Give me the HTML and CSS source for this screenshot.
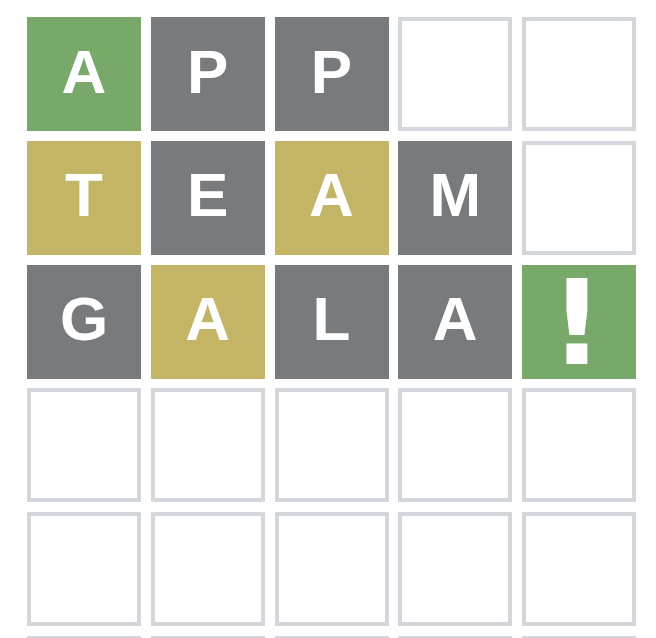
FILE: index.html
```html
<!DOCTYPE html>
<html>
<head>
<meta charset="utf-8">
<link rel="stylesheet" href="styles.css">
</head>
<body>
<div class="board">
  <div class="tile correct">A</div>
  <div class="tile absent">P</div>
  <div class="tile absent">P</div>
  <div class="tile empty"></div>
  <div class="tile empty"></div>

  <div class="tile present">T</div>
  <div class="tile absent">E</div>
  <div class="tile present">A</div>
  <div class="tile absent">M</div>
  <div class="tile empty"></div>

  <div class="tile absent">G</div>
  <div class="tile present">A</div>
  <div class="tile absent">L</div>
  <div class="tile absent">A</div>
  <div class="tile correct bang">!</div>

  <div class="tile empty"></div>
  <div class="tile empty"></div>
  <div class="tile empty"></div>
  <div class="tile empty"></div>
  <div class="tile empty"></div>

  <div class="tile empty"></div>
  <div class="tile empty"></div>
  <div class="tile empty"></div>
  <div class="tile empty"></div>
  <div class="tile empty"></div>

  <div class="tile empty"></div>
  <div class="tile empty"></div>
  <div class="tile empty"></div>
  <div class="tile empty"></div>
  <div class="tile empty"></div>
</div>
</body>
</html>
```
FILE: styles.css
```css
html, body {
  margin: 0;
  padding: 0;
  background: #ffffff;
  overflow: hidden;
}

.board {
  display: grid;
  grid-template-columns: repeat(5, 114px);
  grid-auto-rows: 114px;
  gap: 9.75px;
  padding: 17px 0 0 27px;
}

.tile {
  box-sizing: border-box;
  display: flex;
  align-items: center;
  justify-content: center;
  font-family: "Liberation Sans", Arial, sans-serif;
  font-weight: 700;
  font-size: 62px;
  line-height: 1;
  color: #ffffff;
  padding-bottom: 5px;
}

.correct { background: #78a86a; }
.present { background: #c4b465; }
.absent  { background: #787b7e; }
.empty {
  background: #ffffff;
  border: 4px solid #d3d6da;
}

.bang {
  font-family: "DejaVu Sans", sans-serif;
  font-size: 118px;
  padding-bottom: 0;
  padding-top: 2px;
  padding-right: 4px;
}
```
